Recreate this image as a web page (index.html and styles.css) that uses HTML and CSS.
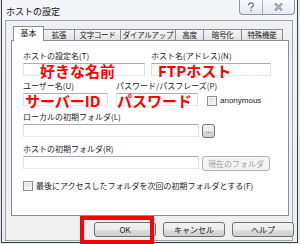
FILE: index.html
```html
<!DOCTYPE html>
<html lang="ja">
<head>
<meta charset="utf-8">
<link rel="stylesheet" href="styles.css">
</head>
<body>
<div class="window">
  <div class="titlebar">
    <span class="title">ホストの設定</span>
    <div class="caption">
      <div class="cbtn help">
        <svg width="8" height="10" viewBox="0 0 8 10"><path d="M1.5 3.2 C1.5 1.5 2.6 0.8 4 0.8 C5.5 0.8 6.5 1.6 6.5 2.9 C6.5 4.2 5.3 4.6 4.6 5.2 C4.2 5.6 4.1 6 4.1 6.8" fill="none" stroke="#6d7680" stroke-width="1.2"/><rect x="3.4" y="8" width="1.4" height="1.4" fill="#6d7680"/></svg>
      </div>
      <div class="cbtn close">
        <svg width="9" height="8" viewBox="0 0 9 8"><path d="M1 0.5 L8 7.5 M8 0.5 L1 7.5" stroke="#7d8690" stroke-width="2.2" fill="none"/><path d="M1 0.5 L8 7.5 M8 0.5 L1 7.5" stroke="#eef1f5" stroke-width="0.7" fill="none"/></svg>
      </div>
    </div>
  </div>
  <div class="client">
    <div class="tabs">
      <div class="tab active w31">基本</div>
      <div class="tab w31">拡張</div>
      <div class="tab w46">文字コード</div>
      <div class="tab w55">ダイアルアップ</div>
      <div class="tab w28">高度</div>
      <div class="tab w38">暗号化</div>
      <div class="tab w41">特殊機能</div>
    </div>
    <div class="panel">
      <div class="row">
        <div class="field f-name">
          <div class="label">ホストの設定名(T)</div>
          <div class="input"><span class="red pad-name">好きな名前</span></div>
        </div>
        <div class="field f-host">
          <div class="label">ホスト名(アドレス)(N)</div>
          <div class="input"><span class="red pad-host">FTPホスト</span></div>
        </div>
      </div>
      <div class="row row2">
        <div class="field f-user">
          <div class="label">ユーザー名(U)</div>
          <div class="input"><span class="red pad-user">サーバーID</span></div>
        </div>
        <div class="field f-pass">
          <div class="label">パスワード/パスフレーズ(P)</div>
          <div class="input"><span class="red">パスワード</span></div>
        </div>
        <div class="check anon"><span class="box"></span><span class="latin">anonymous</span></div>
      </div>
      <div class="field row3">
        <div class="label">ローカルの初期フォルダ(L)</div>
        <div class="inline">
          <div class="input f-path"></div>
          <div class="btn small">...</div>
        </div>
      </div>
      <div class="field row3">
        <div class="label">ホストの初期フォルダ(R)</div>
        <div class="inline">
          <div class="input f-path"></div>
          <div class="btn current disabled">現在のフォルダ</div>
        </div>
      </div>
      <div class="check last"><span class="box"></span><span>最後にアクセスしたフォルダを次回の初期フォルダとする(F)</span></div>
    </div>
    <div class="buttons">
      <div class="btn dlg">OK</div>
      <div class="btn dlg">キャンセル</div>
      <div class="btn dlg">ヘルプ</div>
    </div>
  </div>
</div>
<div class="highlight"></div>
</body>
</html>
```
FILE: styles.css
```css
* { box-sizing: border-box; }
body {
  margin: 0;
  width: 300px;
  height: 244px;
  overflow: hidden;
  position: relative;
  background: #e4e7eb;
  font-family: "Noto Sans CJK JP", "Noto Sans", sans-serif;
  font-size: 8px;
  color: #1a1a1a;
}
.window {
  margin-left: 1px;
  width: 297px;
  height: 243px;
  border: 1px solid #3c3f44;
  border-top: none;
  background: linear-gradient(#f3f5f8, #e9ecf0);
  display: flex;
  flex-direction: column;
}
.titlebar {
  height: 20px;
  display: flex;
  align-items: flex-start;
  padding-left: 4px;
}
.title {
  font-size: 9px;
  line-height: 10px;
  margin-top: 7px;
  color: #111;
}
.caption {
  margin-left: auto;
  margin-right: 2px;
  width: 56px;
  height: 15px;
  border: 1px solid #8c97a5;
  border-top: none;
  border-radius: 0 0 4px 4px;
  background: linear-gradient(#f7f9fb, #e6eaef);
  display: flex;
}
.cbtn {
  display: flex;
  align-items: center;
  justify-content: center;
}
.cbtn.help { width: 23px; border-right: 1px solid #a3adb9; }
.cbtn.close { flex: 1; }
.client {
  margin: 0 4px 0 3px;
  height: 221px;
  border: 1px solid #9aa5b3;
  background: #f0f0f0;
  padding: 5px 0 0 5px;
  display: flex;
  flex-direction: column;
}
.tabs {
  display: flex;
  align-items: flex-end;
  height: 14px;
  margin-left: 2px;
}
.tab {
  height: 11px;
  border: 1px solid #898c95;
  border-left: none;
  border-bottom: none;
  background: linear-gradient(#f5f5f5, #e3e3e3);
  font-size: 7.5px;
  line-height: 10px;
  text-align: center;
  white-space: nowrap;
  letter-spacing: -0.3px;
}
.tab.active {
  height: 15px;
  margin-bottom: -1px;
  border-left: 1px solid #898c95;
  background: #fff;
  position: relative;
  line-height: 12px;
  font-size: 8px;
  letter-spacing: 0;
}
.w31 { width: 31px; }
.w46 { width: 46px; }
.w55 { width: 55px; }
.w28 { width: 28px; }
.w38 { width: 38px; }
.w41 { width: 41px; }
.panel {
  width: 278px;
  height: 176px;
  border: 1px solid #898c95;
  background: #fff;
  padding: 10px 0 0 11px;
  display: flex;
  flex-direction: column;
}
.row { display: flex; }
.row2 { margin-top: 5px; gap: 8px; }
.row3 { margin-top: 6px; }
.field { display: flex; flex-direction: column; }
.label {
  height: 10px;
  line-height: 10px;
  margin-bottom: 2px;
  white-space: nowrap;
}
.input {
  height: 13px;
  border: 1px solid;
  border-color: #abadb3 #dbdfe6 #e3e9ef #e2e3ea;
  background: #fff;
  white-space: nowrap;
}
.red {
  display: block;
  color: #ff0000;
  font-weight: bold;
  font-size: 15px;
  line-height: 14px;
  letter-spacing: 0;
}
.pad-name { padding-left: 16px; }
.pad-host { padding-left: 6px; }
.pad-user { padding-left: 1px; }
.f-name { width: 122px; margin-right: 6px; }
.f-host { width: 120px; }
.f-user { width: 85px; }
.f-pass { width: 82px; }
.f-path { width: 176px; }
.inline { display: flex; gap: 3px; }
.check {
  display: flex;
  align-items: center;
  gap: 3px;
  line-height: 10px;
  white-space: nowrap;
}
.check.anon { align-self: flex-end; margin-left: 1px; }
.check.last { margin-top: 10px; }
.box {
  width: 10px;
  height: 10px;
  border: 1px solid #8e8f8f;
  background: linear-gradient(135deg, #dcdcdc, #fbfbfb);
  box-shadow: inset 0 0 0 1px #f4f4f4;
}
.latin {
  font-family: "Liberation Sans", sans-serif;
  font-size: 8px;
  color: #222;
}
.btn {
  height: 15px;
  border: 1px solid #707070;
  border-radius: 3px;
  background: linear-gradient(#f2f2f2 0%, #ebebeb 50%, #dddddd 51%, #cfcfcf 100%);
  display: flex;
  align-items: center;
  justify-content: center;
  white-space: nowrap;
  line-height: 10px;
}
.btn.small { width: 13px; height: 14px; font-family: "Liberation Sans", sans-serif; font-size: 7px; }
.btn.current { width: 68px; }
.btn.disabled {
  color: #a0a0a0;
  border-color: #adb2b5;
  background: #f4f4f4;
}
.buttons {
  display: flex;
  justify-content: flex-end;
  gap: 7px;
  margin-top: 6px;
  width: 283px;
}
.btn.dlg { width: 62px; }
.highlight {
  position: absolute;
  left: 80px;
  top: 216px;
  width: 74px;
  height: 28px;
  border: 4px solid #ff0000;
}
```
